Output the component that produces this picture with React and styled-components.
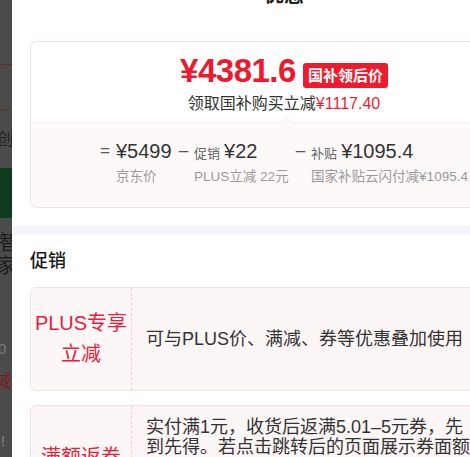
import React from 'react';
import styled, { createGlobalStyle } from 'styled-components';

////////////////////////////////////////////////////////////////////////////
const GlobalStyle = createGlobalStyle`
  html, body {
    margin: 0;
    padding: 0;
    overflow: hidden;
    background: #fff;
  }
  body {
    font-family: "Liberation Sans", "Noto Sans CJK SC", sans-serif;
  }
`;

const Screen = styled.div`
  display: flex;
  align-items: flex-start;
  width: 470px;
  height: 457px;
  overflow: hidden;
`;

/* page behind the sheet, dimmed ---------------------------- */
const Backdrop = styled.div`
  flex: 0 0 12px;
  height: 457px;
  display: flex;
  flex-direction: column;
  background: #4b4b4b;
  overflow: hidden;
`;

const BackBand = styled.div`
  flex: 0 0 ${(p) => p.$h}px;
  background: ${(p) => p.$bg || 'transparent'};
  border-bottom: ${(p) => (p.$line ? `1px solid ${p.$line}` : 'none')};
  display: flex;
  align-items: center;
  overflow: hidden;
`;

const BackGlyph = styled.span`
  margin-left: ${(p) => p.$shift || 0}px;
  font-size: ${(p) => p.$size || 18}px;
  line-height: 1;
  color: ${(p) => p.$color || '#1e1e1e'};
  white-space: nowrap;
`;

/* sheet ---------------------------------------------------- */
const Panel = styled.div`
  flex: 0 0 544px;
  display: flex;
  flex-direction: column;
  background: #fff;

  & > * {
    flex-shrink: 0;
  }
`;

const Title = styled.h2`
  margin: -15px 0 0;
  height: 20px;
  line-height: 20px;
  text-align: center;
  font-size: 20px;
  font-weight: 700;
  color: #222;
`;

const PriceCard = styled.div`
  margin: 36px 18px 0;
  border: 1px solid #f3e2e4;
  border-radius: 6px;
  overflow: hidden;
`;

const PriceTop = styled.div`
  padding: 9px 0 7px;
  display: flex;
  flex-direction: column;
  align-items: center;
`;

const PriceRow = styled.div`
  display: flex;
  align-items: center;
  gap: 7px;
  height: 40px;
`;

const BigPrice = styled.span`
  font-size: 33px;
  line-height: 40px;
  font-weight: 700;
  color: #f0182c;
  letter-spacing: -0.5px;
`;

const Tag = styled.span`
  margin-top: 8px;
  height: 25px;
  padding: 0 5px;
  line-height: 25px;
  border-radius: 3px;
  background: #f01a2d;
  color: #fff;
  font-size: 15px;
  font-weight: 700;
`;

const SaveLine = styled.div`
  margin-top: 2px;
  font-size: 16px;
  line-height: 22px;
  color: #333;
`;

const SaveAmount = styled.span`
  color: #e81d2e;
`;

const PriceBottom = styled.div`
  position: relative;
  padding: 15px 0 21px;
  background: #fdf9f9;
  border-top: 1px solid #f7eeef;
  display: flex;
  justify-content: center;
  gap: 7px;

  &::before {
    content: '';
    position: absolute;
    top: -4px;
    left: 253px;
    width: 6px;
    height: 6px;
    background: #fdf9f9;
    border-top: 1px solid #f7eeef;
    border-left: 1px solid #f7eeef;
    transform: rotate(45deg);
  }
`;

const Term = styled.div`
  display: flex;
  gap: 6px;
`;

const Sign = styled.span`
  font-size: 17px;
  line-height: 26px;
  color: #555;
`;

const TermBody = styled.div`
  display: flex;
  flex-direction: column;
  gap: 4px;
`;

const TermTop = styled.div`
  display: flex;
  align-items: baseline;
  gap: 4px;
`;

const TermLabel = styled.span`
  font-size: 13px;
  color: #666;
`;

const TermValue = styled.span`
  font-size: 20px;
  line-height: 26px;
  color: #333;
`;

const TermNote = styled.span`
  font-size: 13.5px;
  line-height: 18px;
  color: #999;
  white-space: nowrap;
`;

const Gap = styled.div`
  margin-top: 18px;
  height: 9px;
  background: #f5f6fa;
`;

const Section = styled.div`
  padding: 14px 18px 0;
  display: flex;
  flex-direction: column;
  gap: 14px;
`;

const SectionTitle = styled.h3`
  margin: 0;
  font-size: 18px;
  line-height: 24px;
  font-weight: 500;
  color: #1a1a1a;
`;

const PromoCard = styled.div`
  display: flex;
  border: 1px solid #f4e0e2;
  border-radius: 6px;
  background: #fdf6f7;
`;

const PromoName = styled.div`
  flex: 0 0 101px;
  box-sizing: border-box;
  padding: 20px 0;
  border-right: 1px dashed #eed0d4;
  display: flex;
  flex-direction: column;
  justify-content: center;
  align-items: center;
  font-size: 20px;
  line-height: 31px;
  color: #e5223a;
  white-space: nowrap;
`;

const PromoText = styled.div`
  flex: 1;
  padding: 11px 14px;
  display: flex;
  align-items: center;
  gap: 32px;
  font-size: 18px;
  line-height: 20px;
  color: #333;
`;

const PromoCopy = styled.div`
  flex: 1;
`;

const Arrow = styled.svg`
  flex: 0 0 16px;
  color: #bbb;
`;

////////////////////////////////////////////////////////////////////////////
const terms = [
  { sign: '=', value: '¥5499', note: '京东价' },
  { sign: '–', label: '促销', value: '¥22', note: 'PLUS立减 22元' },
  { sign: '–', label: '补贴', value: '¥1095.4', note: '国家补贴云闪付减¥1095.4' },
];

const promos = [
  { name: ['PLUS专享', '立减'], text: '可与PLUS价、满减、券等优惠叠加使用' },
  {
    name: ['满额返券'],
    text: '实付满1元，收货后返满5.01–5元券，先到先得。若点击跳转后的页面展示券面额与本活动不一致，以实际到账券为准。返券将在确认收货后发放至账户。',
    arrow: true,
  },
];

const App = () => {
  return (
    <>
      <GlobalStyle />
      <Screen>

        {/* fondo oscurecido ----------------------------*/}
        <Backdrop>
          <BackBand $h={64} $line="#6e2a2a" />
          <BackBand $h={44} $line="#6e2a2a" />
          <BackBand $h={58}>
            <BackGlyph $size={17} $shift={-3} $color="#262626">创</BackGlyph>
          </BackBand>
          <BackBand $h={50} $bg="#0e3a1d" />
          <BackBand $h={13} />
          <BackBand $h={24}>
            <BackGlyph $size={20} $shift={-1} $color="#1c1c1c">智</BackGlyph>
          </BackBand>
          <BackBand $h={22}>
            <BackGlyph $size={20} $shift={-4} $color="#1c1c1c">家</BackGlyph>
          </BackBand>
          <BackBand $h={62} />
          <BackBand $h={18}>
            <BackGlyph $size={15} $shift={-2} $color="#7a7a7a">0</BackGlyph>
          </BackBand>
          <BackBand $h={14} />
          <BackBand $h={20}>
            <BackGlyph $size={17} $shift={-6} $color="#7c1c1c">减</BackGlyph>
          </BackBand>
          <BackBand $h={43} />
          <BackBand $h={14}>
            <BackGlyph $size={14} $shift={1} $color="#8a8a8a">!</BackGlyph>
          </BackBand>
        </Backdrop>

        <Panel>
          <Title>优惠</Title>

          <PriceCard>
            <PriceTop>
              <PriceRow>
                <BigPrice>¥4381.6</BigPrice>
                <Tag>国补领后价</Tag>
              </PriceRow>
              <SaveLine>
                领取国补购买立减<SaveAmount>¥1117.40</SaveAmount>
              </SaveLine>
            </PriceTop>

            <PriceBottom>
              {terms.map((t) => (
                <Term key={t.note}>
                  <Sign>{t.sign}</Sign>
                  <TermBody>
                    <TermTop>
                      {t.label && <TermLabel>{t.label}</TermLabel>}
                      <TermValue>{t.value}</TermValue>
                    </TermTop>
                    <TermNote>{t.note}</TermNote>
                  </TermBody>
                </Term>
              ))}
            </PriceBottom>
          </PriceCard>

          <Gap />

          <Section>
            <SectionTitle>促销</SectionTitle>
            {promos.map((p) => (
              <PromoCard key={p.name.join('')}>
                <PromoName>
                  {p.name.map((line) => (
                    <span key={line}>{line}</span>
                  ))}
                </PromoName>
                <PromoText>
                  <PromoCopy>{p.text}</PromoCopy>
                  {p.arrow && (
                    <Arrow viewBox="0 0 16 16" width="16" height="16">
                      <path d="M6 3l5 5-5 5" fill="none" stroke="currentColor" strokeWidth="1.5" />
                    </Arrow>
                  )}
                </PromoText>
              </PromoCard>
            ))}
          </Section>
        </Panel>
      </Screen>
    </>
  );
};

export default App;
